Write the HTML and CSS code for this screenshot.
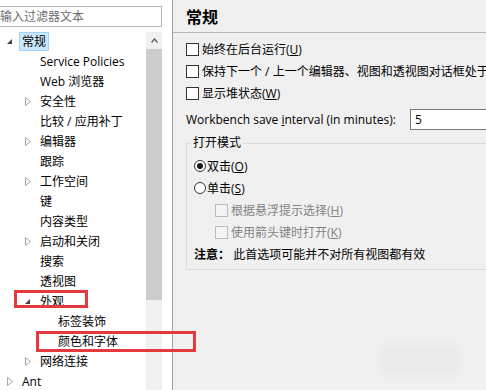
FILE: index.html
```html
<!DOCTYPE html>
<html lang="zh-CN">
<head>
  <meta charset="UTF-8">
  <meta name="viewport" content="width=device-width, initial-scale=1.0">
  <title>首选项 - 常规</title>
  <link rel="stylesheet" href="styles.css">
</head>
<body>
  <div class="window">
    <div class="nav">
      <input type="text" class="filter" placeholder="输入过滤器文本">
      <div class="tree-wrap">
        <ul class="tree">
          <li class="lvl-0"><span class="arrow"><svg width="5" height="5" viewBox="0 0 5 5"><polygon points="5,0 5,5 0,5" fill="#404040"/></svg></span><span class="label selected">常规</span></li>
          <li class="lvl-1"><span class="arrow"></span><span class="label">Service Policies</span></li>
          <li class="lvl-1"><span class="arrow"></span><span class="label">Web 浏览器</span></li>
          <li class="lvl-1"><span class="arrow"><svg width="6" height="9" viewBox="0 0 6 9"><polygon points="0.5,0.5 5.5,4.5 0.5,8.5" fill="none" stroke="#a6a6a6"/></svg></span><span class="label">安全性</span></li>
          <li class="lvl-1"><span class="arrow"></span><span class="label">比较 / 应用补丁</span></li>
          <li class="lvl-1"><span class="arrow"><svg width="6" height="9" viewBox="0 0 6 9"><polygon points="0.5,0.5 5.5,4.5 0.5,8.5" fill="none" stroke="#a6a6a6"/></svg></span><span class="label">编辑器</span></li>
          <li class="lvl-1"><span class="arrow"></span><span class="label">跟踪</span></li>
          <li class="lvl-1"><span class="arrow"><svg width="6" height="9" viewBox="0 0 6 9"><polygon points="0.5,0.5 5.5,4.5 0.5,8.5" fill="none" stroke="#a6a6a6"/></svg></span><span class="label">工作空间</span></li>
          <li class="lvl-1"><span class="arrow"></span><span class="label">键</span></li>
          <li class="lvl-1"><span class="arrow"></span><span class="label">内容类型</span></li>
          <li class="lvl-1"><span class="arrow"><svg width="6" height="9" viewBox="0 0 6 9"><polygon points="0.5,0.5 5.5,4.5 0.5,8.5" fill="none" stroke="#a6a6a6"/></svg></span><span class="label">启动和关闭</span></li>
          <li class="lvl-1"><span class="arrow"></span><span class="label">搜索</span></li>
          <li class="lvl-1"><span class="arrow"></span><span class="label">透视图</span></li>
          <li class="lvl-1"><span class="arrow"><svg width="5" height="5" viewBox="0 0 5 5"><polygon points="5,0 5,5 0,5" fill="#404040"/></svg></span><span class="label">外观</span></li>
          <li class="lvl-2"><span class="arrow"></span><span class="label">标签装饰</span></li>
          <li class="lvl-2"><span class="arrow"></span><span class="label">颜色和字体</span></li>
          <li class="lvl-1"><span class="arrow"><svg width="6" height="9" viewBox="0 0 6 9"><polygon points="0.5,0.5 5.5,4.5 0.5,8.5" fill="none" stroke="#a6a6a6"/></svg></span><span class="label">网络连接</span></li>
          <li class="lvl-0"><span class="arrow"><svg width="6" height="9" viewBox="0 0 6 9"><polygon points="0.5,0.5 5.5,4.5 0.5,8.5" fill="none" stroke="#a6a6a6"/></svg></span><span class="label">Ant</span></li>
        </ul>
        <div class="scrollbar">
          <div class="sb-btn"><svg width="7" height="5" viewBox="0 0 7 5"><polyline points="0.5,4.5 3.5,1 6.5,4.5" fill="none" stroke="#606060" stroke-width="1.4"/></svg></div>
          <div class="sb-thumb"></div>
        </div>
      </div>
    </div>

    <div class="page">
      <div class="page-title">常规</div>
      <div class="page-body">
        <div class="row"><span class="box"></span>始终在后台运行(<u>U</u>)</div>
        <div class="row"><span class="box"></span>保持下一个 / 上一个编辑器、视图和透视图对话框处于打开状态</div>
        <div class="row"><span class="box"></span>显示堆状态(<u>W</u>)</div>
        <div class="interval">
          <span class="interval-label">Workbench save <u>i</u>nterval (in minutes):</span>
          <span class="interval-input">5</span>
        </div>
        <fieldset class="group">
          <legend>打开模式</legend>
          <div class="row"><span class="radio checked"></span>双击(<u>O</u>)</div>
          <div class="row"><span class="radio"></span>单击(<u>S</u>)</div>
          <div class="row sub disabled"><span class="box"></span>根据悬浮提示选择(<u>H</u>)</div>
          <div class="row sub disabled"><span class="box"></span>使用箭头键时打开(<u>K</u>)</div>
          <div class="row"><b>注意：</b>&nbsp;此首选项可能并不对所有视图都有效</div>
        </fieldset>
      </div>
    </div>

    <div class="mark mark-1"></div>
    <div class="mark mark-2"></div>
    <div class="smudge"></div>
  </div>
</body>
</html>
```

FILE: styles.css
```css
body {
  margin: 0;
  font-family: "Open Sans", "Noto Sans CJK SC", sans-serif;
  font-size: 12px;
  color: #000000;
}
.window {
  position: relative;
  display: flex;
  width: 486px;
  height: 390px;
  overflow: hidden;
  background: #ffffff;
}

/* left: filter + tree */
.nav {
  flex: 0 0 172px;
  border-right: 1px solid #a0a0a0;
  background: #ffffff;
  display: flex;
  flex-direction: column;
}
.filter {
  display: block;
  box-sizing: border-box;
  width: 166px;
  height: 21px;
  margin: 6px 0 0 -4px;
  padding: 0 0 0 3px;
  border: 1px solid #b4b4b4;
  font-family: inherit;
  font-size: 12px;
  outline: none;
}
.filter::placeholder {
  color: #6d6d6d;
}
.tree-wrap {
  display: flex;
  flex: 1;
  margin-top: 4px;
  min-height: 0;
}
.tree {
  flex: 1;
  list-style: none;
  margin: 0;
  padding: 0;
  white-space: nowrap;
}
.tree li {
  display: flex;
  align-items: center;
  height: 20px;
  padding-left: 4px;
}
.tree li.lvl-1 {
  padding-left: 22px;
}
.tree li.lvl-2 {
  padding-left: 40px;
}
.arrow {
  flex: none;
  width: 15px;
  display: flex;
  align-items: center;
}
.arrow svg {
  margin-left: 3px;
}
.label {
  padding: 0 2px;
  border: 1px solid transparent;
  line-height: 17px;
}
.label.selected {
  background: #cce8ff;
  border-color: #99d1ff;
}
.scrollbar {
  flex: 0 0 16px;
  margin: 1px 10px 0 0;
  background: #f0f0f0;
}
.sb-btn {
  height: 17px;
  display: flex;
  align-items: center;
  justify-content: center;
}
.sb-thumb {
  height: 251px;
  background: #cdcdcd;
}

/* right: preference page */
.page {
  flex: 1;
  min-width: 0;
  background: #f0f0f0;
  white-space: nowrap;
  overflow: hidden;
}
.page-title {
  height: 32px;
  line-height: 34px;
  padding-left: 13px;
  border-bottom: 1px solid #b9b9b9;
  font-size: 16px;
  font-weight: bold;
}
.page-body {
  padding: 5px 0 0 13px;
}
.row {
  display: flex;
  align-items: center;
  height: 22px;
}
.box {
  flex: none;
  box-sizing: border-box;
  width: 13px;
  height: 13px;
  margin-right: 3px;
  border: 1px solid #333333;
  background: #ffffff;
}
.radio {
  flex: none;
  box-sizing: border-box;
  width: 12px;
  height: 12px;
  margin-right: 1px;
  border: 1px solid #333333;
  border-radius: 50%;
  background: #ffffff;
  display: flex;
  align-items: center;
  justify-content: center;
}
.radio.checked::after {
  content: "";
  width: 6px;
  height: 6px;
  border-radius: 50%;
  background: #1a1a1a;
}
.interval {
  display: flex;
  align-items: center;
  height: 21px;
  margin-top: 5px;
}
.interval-label {
  flex: 0 0 224px;
}
.interval-input {
  flex: 1;
  box-sizing: border-box;
  height: 21px;
  line-height: 19px;
  margin-right: -20px;
  padding-left: 4px;
  border: 1px solid #7a7a7a;
  background: #ffffff;
}
.group {
  margin: 5px -20px 0 0;
  padding: 4px 0 4px 7px;
  min-width: 0;
  border: 1px solid #dcdcdc;
}
.group legend {
  margin-left: -3px;
  padding: 0 2px;
  line-height: 16px;
}
.row.sub {
  padding-left: 21px;
}
.row.disabled {
  color: #838383;
}
.row.disabled .box {
  border-color: #bcbcbc;
  background: #f4f4f4;
}

/* annotation boxes drawn over the screenshot */
.mark {
  position: absolute;
  box-sizing: border-box;
  border: 3px solid #e4393f;
}
.mark-1 {
  left: 14px;
  top: 290px;
  width: 74px;
  height: 18px;
}
.mark-2 {
  left: 36px;
  top: 331px;
  width: 160px;
  height: 21px;
}
.smudge {
  position: absolute;
  left: 380px;
  top: 345px;
  width: 80px;
  height: 30px;
  background: rgba(0, 0, 0, 0.025);
  filter: blur(4px);
}
```
